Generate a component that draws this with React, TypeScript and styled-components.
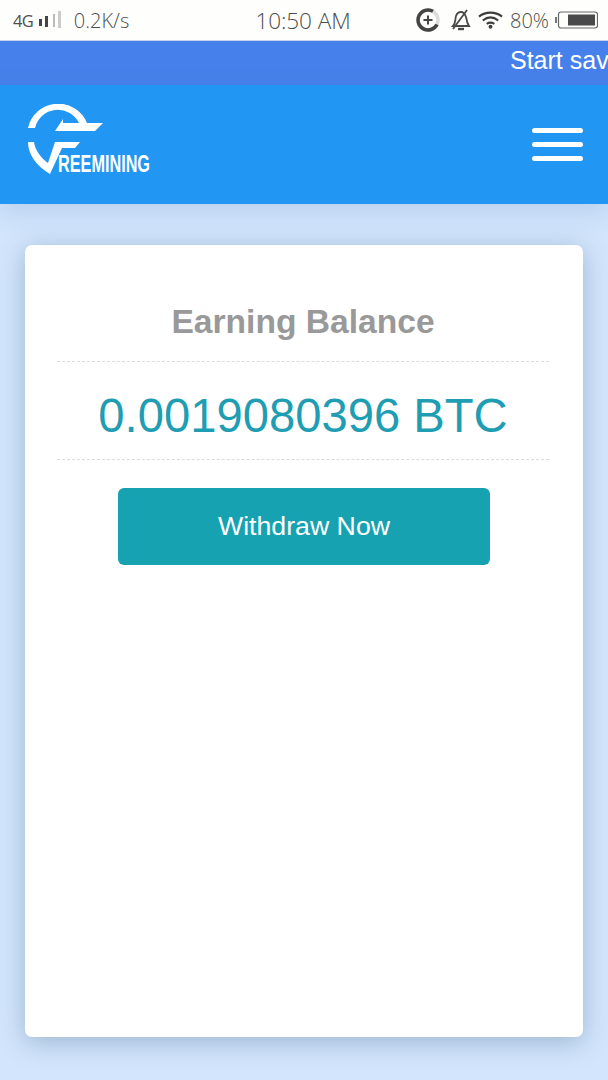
import React from "react";
import styled, { createGlobalStyle } from "styled-components";

const GlobalStyle = createGlobalStyle`
  html, body {
    margin: 0;
    padding: 0;
    background: #d2e5fc;
  }
  body {
    font-family: "Liberation Sans", Arial, sans-serif;
  }
`;

const Page = styled.div`
  width: 608px;
  height: 1080px;
  display: flex;
  flex-direction: column;
  overflow: hidden;
  background: #d2e5fc;
`;

const StatusBar = styled.div`
  height: 40px;
  display: grid;
  grid-template-columns: 1fr auto 1fr;
  align-items: center;
  padding: 0 10px 0 13px;
  background: #fefefc;
  color: #4e4e4e;
  border-bottom: 1px solid #c4d2ec;
`;

const StatusLeft = styled.div`
  display: flex;
  align-items: center;
`;

const StatusRight = styled.div`
  display: flex;
  align-items: center;
  justify-content: flex-end;
`;

const Network = styled.span`
  font-family: "Open Sans", sans-serif;
  font-size: 16.5px;
  letter-spacing: -0.8px;
`;

const Speed = styled.span`
  font-family: "Open Sans", sans-serif;
  font-size: 20px;
  font-weight: 300;
  margin-left: 11px;
`;

const Clock = styled.span`
  font-family: "Open Sans", sans-serif;
  font-size: 22.6px;
  font-weight: 300;
  letter-spacing: -0.1px;
  margin-right: 5px;
`;

const Percent = styled.span`
  font-family: "Open Sans", sans-serif;
  font-size: 20px;
  font-weight: 300;
  margin: 0 6px 0 7px;
`;

const Ticker = styled.div`
  height: 44px;
  background: #4680ea;
  color: #ffffff;
  font-size: 25px;
  line-height: 38px;
  padding-left: 510px;
  white-space: nowrap;
  overflow: hidden;
`;

const Header = styled.header`
  height: 119px;
  display: flex;
  align-items: center;
  justify-content: space-between;
  padding: 0 25px 0 26px;
  background: #2196f3;
  box-shadow: 0 8px 24px rgba(70, 110, 170, 0.18);
  position: relative;
`;

const LogoMark = styled.svg`
  margin-bottom: 7px;
`;

const MenuButton = styled.div`
  display: flex;
  flex-direction: column;
  gap: 9px;
  width: 51px;
`;

const MenuLine = styled.span`
  height: 5px;
  border-radius: 3px;
  background: #ffffff;
`;

const Main = styled.main`
  flex: 1;
  display: flex;
  padding: 41px 25px 43px;
`;

const Card = styled.section`
  flex: 1;
  display: flex;
  flex-direction: column;
  align-items: center;
  padding: 0 32px;
  background: #ffffff;
  border-radius: 7px;
  box-shadow: 0 5px 26px rgba(60, 90, 130, 0.34);
`;

const Row = styled.div`
  align-self: stretch;
  margin-right: 2px;
  text-align: center;
  border-bottom: 1px dashed #dcdcdc;
`;

const Title = styled(Row)`
  padding-top: 57px;
  height: 59px;
  line-height: 40px;
  font-size: 33.6px;
  font-weight: 700;
  color: #999999;
`;

const Amount = styled(Row)`
  height: 97px;
  line-height: 107px;
  font-size: 47.2px;
  color: #1f9db2;
`;

const Withdraw = styled.button`
  margin-top: 28px;
  width: 372px;
  height: 77px;
  border: 0;
  border-radius: 6px;
  background: #17a2b2;
  color: #ffffff;
  font-family: inherit;
  font-size: 26.7px;
`;

const SignalSvg = styled.svg`
  margin-left: 6px;
`;

const DataSvg = styled.svg`
  margin-right: 11px;
`;

const MuteSvg = styled.svg`
  margin-right: 7px;
`;

const Logo = () => (
  <LogoMark width="190" height="74" viewBox="0 0 190 74">
    <path
      d="M2 24 A31 31 0 0 1 61 19 L53 19 A23.500 23.500 0 0 0 9 24 Z"
      fill="#fff"
    />
    <path d="M37 15 L37 19 L77 19 L69 27 L29 27 Z" fill="#fff" />
    <path
      d="M2 38 L8 38 C9 46 15 54 22 59 L29 38 L54 38 L49 44 L36 44 L24 70 C10 62 2 50 2 38 Z"
      fill="#fff"
    />
    <text
      x="32"
      y="68"
      fontFamily="'Liberation Sans', sans-serif"
      fontWeight="700"
      fontSize="23"
      textLength="92"
      lengthAdjust="spacingAndGlyphs"
      fill="#ffffff"
    >
      REEMINING
    </text>
  </LogoMark>
);

const SignalIcon = () => (
  <SignalSvg width="24" height="18" viewBox="0 0 24 18">
    <rect x="0" y="8" width="3" height="7" fill="#444" />
    <rect x="6" y="5" width="3" height="11" fill="#444" />
    <rect x="14" y="3" width="2" height="13" fill="#bbb" />
    <rect x="19" y="0" width="3" height="17" fill="#ccc" />
  </SignalSvg>
);

const DataIcon = () => (
  <DataSvg width="24" height="26" viewBox="0 0 24 26">
    <circle cx="12" cy="13" r="10" fill="none" stroke="#ddd" strokeWidth="3.5" />
    <path d="M17 4.300 A10 10 0 1 0 21 17.500" fill="none" stroke="#444" strokeWidth="3.500" />
    <path d="M12 8.500 V17.500 M7.500 13 H16.500" stroke="#444" strokeWidth="2" />
  </DataSvg>
);

const MuteIcon = () => (
  <MuteSvg width="20" height="22" viewBox="0 0 20 22">
    <path
      d="M2 17 C5 14 4 10 5 7 C6 4 8 3 10 3 C12 3 14 5 15 8 C15.500 11 16 14 18 17 Z"
      fill="none"
      stroke="#4a4a4a"
      strokeWidth="1.800"
    />
    <path d="M7 20 H13" stroke="#4a4a4a" strokeWidth="2.400" />
    <path d="M2 20 L16 1" stroke="#4a4a4a" strokeWidth="1.800" />
  </MuteSvg>
);

const WifiIcon = () => (
  <svg width="25" height="18" viewBox="0 0 26 18">
    <g fill="none" stroke="#3e3e3e" strokeWidth="2.200">
      <path d="M1 5.500 C8 0 18 0 25 5.500" />
      <path d="M5 9.500 C10 5.500 16 5.500 21 9.500" />
      <path d="M9 13 C11.500 11.500 14.500 11.500 17 13" />
    </g>
    <circle cx="13" cy="16" r="2" fill="#3e3e3e" />
  </svg>
);

const BatteryIcon = () => (
  <svg width="43" height="18" viewBox="0 0 43 18">
    <rect x="0" y="6" width="2" height="6" fill="#777" />
    <rect x="3.500" y="1" width="39" height="16" rx="2.500" fill="none" stroke="#666" strokeWidth="1.200" />
    <rect x="13" y="3.500" width="27" height="11" fill="#4a4a4a" />
  </svg>
);

export default function App() {
  return (
    <Page>
      <GlobalStyle />
      <StatusBar>
        <StatusLeft>
          <Network>4G</Network>
          <SignalIcon />
          <Speed>0.2K/s</Speed>
        </StatusLeft>
        <Clock>10:50 AM</Clock>
        <StatusRight>
          <DataIcon />
          <MuteIcon />
          <WifiIcon />
          <Percent>80%</Percent>
          <BatteryIcon />
        </StatusRight>
      </StatusBar>
      <Ticker>Start saving</Ticker>
      <Header>
        <Logo />
        <MenuButton>
          <MenuLine />
          <MenuLine />
          <MenuLine />
        </MenuButton>
      </Header>
      <Main>
        <Card>
          <Title>Earning Balance</Title>
          <Amount>0.0019080396 BTC</Amount>
          <Withdraw>Withdraw Now</Withdraw>
        </Card>
      </Main>
    </Page>
  );
}
